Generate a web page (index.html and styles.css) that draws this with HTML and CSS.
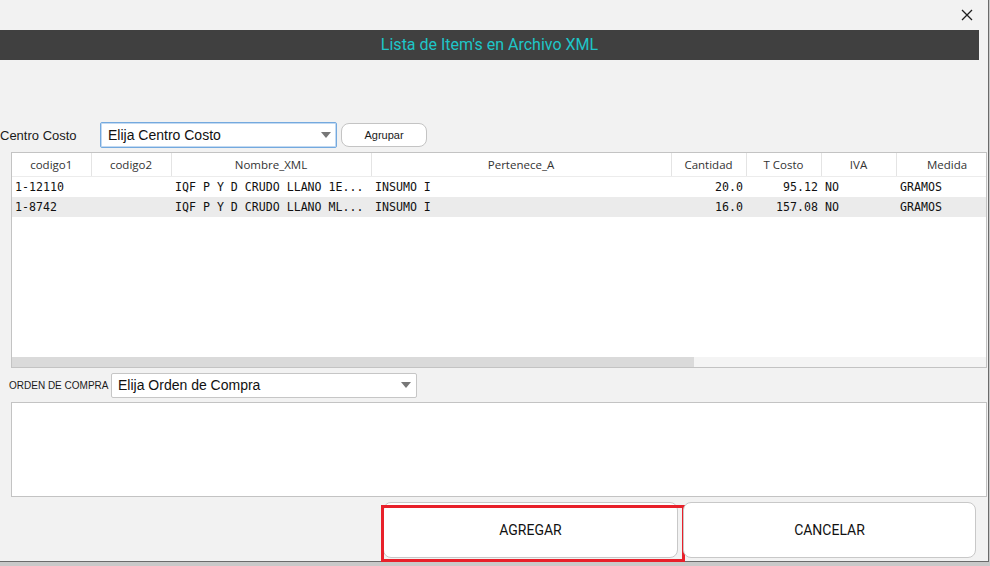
FILE: index.html
```html
<!DOCTYPE html>
<html lang="es">
<head>
    <meta charset="UTF-8">
    <meta name="viewport" content="width=device-width, initial-scale=1.0">
    <title>Lista de Item's en Archivo XML</title>
    <link rel="stylesheet" href="styles.css">
</head>
<body>
    <div class="window">
        <div class="topbar">
            <button class="close" type="button" aria-label="Cerrar">
                <svg width="12" height="12" viewBox="0 0 12 12"><path d="M1 1 L11 11 M11 1 L1 11" stroke="#1e1e1e" stroke-width="1.3" fill="none"/></svg>
            </button>
        </div>
        <h1 class="title">Lista de Item's en Archivo XML</h1>

        <div class="toolbar">
            <span class="label">Centro Costo</span>
            <div class="select select-focus select-centro">
                <span>Elija Centro Costo</span>
                <svg width="10" height="6" viewBox="0 0 10 6"><path d="M0 0 H10 L5 6 Z" fill="#777"/></svg>
            </div>
            <button class="btn-small" type="button">Agrupar</button>
        </div>

        <div class="grid">
            <div class="grid-view">
                <table>
                    <colgroup>
                        <col style="width:79px"><col style="width:80px"><col style="width:200px"><col style="width:300px">
                        <col style="width:75px"><col style="width:75px"><col style="width:75px"><col style="width:102px">
                    </colgroup>
                    <thead>
                        <tr>
                            <th>codigo1</th><th>codigo2</th><th>Nombre_XML</th><th>Pertenece_A</th>
                            <th>Cantidad</th><th>T Costo</th><th>IVA</th><th>Medida</th>
                        </tr>
                    </thead>
                    <tbody>
                        <tr>
                            <td>1-12110</td><td></td><td>IQF P Y D CRUDO LLANO 1E...</td><td>INSUMO I</td>
                            <td class="num">20.0</td><td class="num">95.12</td><td>NO</td><td>GRAMOS</td>
                        </tr>
                        <tr class="alt">
                            <td>1-8742</td><td></td><td>IQF P Y D CRUDO LLANO ML...</td><td>INSUMO I</td>
                            <td class="num">16.0</td><td class="num">157.08</td><td>NO</td><td>GRAMOS</td>
                        </tr>
                    </tbody>
                </table>
            </div>
            <div class="hscroll"><div class="thumb"></div></div>
        </div>

        <div class="orden-row">
            <span class="label-small">ORDEN DE COMPRA</span>
            <div class="select select-orden">
                <span>Elija Orden de Compra</span>
                <svg width="10" height="6" viewBox="0 0 10 6"><path d="M0 0 H10 L5 6 Z" fill="#777"/></svg>
            </div>
        </div>

        <div class="notes"></div>

        <div class="actions">
            <button class="action" type="button">AGREGAR<span class="highlight"></span></button>
            <button class="action action-cancel" type="button">CANCELAR</button>
        </div>
    </div>
</body>
</html>
```

FILE: styles.css
```css
body {
    margin: 0;
    background: #c9c9c9;
    font-family: "Liberation Sans", Arial, sans-serif;
}
.window {
    width: 988px;
    height: 561px;
    background: #f2f2f2;
    border-right: 1px solid #6b6b6b;
    border-bottom: 1px solid #6b6b6b;
    display: flex;
    flex-direction: column;
}
.topbar {
    height: 30px;
    display: flex;
    justify-content: flex-end;
    align-items: center;
    padding-right: 15px;
}
.close {
    background: none;
    border: none;
    padding: 0;
    width: 12px;
    height: 12px;
    display: flex;
}
.title {
    margin: 0 9px 0 0;
    height: 30px;
    background: #404040;
    color: #1ec6c8;
    font-family: Roboto, sans-serif;
    font-weight: 400;
    font-size: 16px;
    line-height: 30px;
    text-align: center;
}
.toolbar {
    margin-top: 62px;
    height: 26px;
    display: flex;
    align-items: center;
}
.label {
    width: 100px;
    font-size: 13px;
    color: #1a1a1a;
}
.select {
    box-sizing: border-box;
    background: #fff;
    border: 1px solid #c6c6c6;
    border-radius: 2px;
    display: flex;
    align-items: center;
    justify-content: space-between;
    font-size: 14px;
    color: #111;
}
.select-focus {
    border-color: #74a9de;
    box-shadow: inset 0 0 0 1px #c3daf2;
}
.select-centro {
    width: 237px;
    height: 26px;
    padding: 0 5px 0 7px;
}
.btn-small {
    margin-left: 4px;
    width: 86px;
    height: 24px;
    background: #fff;
    border: 1px solid #c4c4c4;
    border-radius: 8px;
    font-family: "Liberation Sans", Arial, sans-serif;
    font-size: 11px;
    color: #1a1a1a;
    padding: 0;
}
.grid {
    margin: 4px 0 0 11px;
    width: 974px;
    border: 1px solid #c3c3c3;
    background: #fff;
}
.grid-view {
    height: 204px;
    overflow: hidden;
}
table {
    border-collapse: collapse;
    table-layout: fixed;
    width: 986px;
}
th {
    height: 23px;
    padding: 0;
    font-family: "Open Sans", sans-serif;
    font-weight: 400;
    font-size: 11.5px;
    color: #333;
    text-align: center;
    border-right: 1px solid #e4e4e4;
    border-bottom: 1px solid #ececec;
    white-space: nowrap;
}
td {
    height: 20px;
    padding: 0 4px;
    font-family: "DejaVu Sans Mono", monospace;
    font-size: 11.6px;
    color: #111;
    white-space: nowrap;
    overflow: hidden;
}
td:first-child {
    padding-left: 3px;
}
td.num {
    text-align: right;
    padding-right: 3px;
}
tr.alt td {
    background: #ebebeb;
}
.hscroll {
    height: 10px;
    background: #f4f4f4;
}
.thumb {
    width: 682px;
    height: 10px;
    background: #dadada;
}
.orden-row {
    margin-top: 5px;
    height: 24px;
    display: flex;
    align-items: center;
    padding-left: 9px;
}
.label-small {
    width: 102px;
    font-size: 10px;
    color: #1a1a1a;
}
.select-orden {
    width: 306px;
    height: 25px;
    padding: 0 5px 0 6px;
}
.notes {
    margin: 5px 0 0 11px;
    width: 974px;
    height: 93px;
    background: #fff;
    border: 1px solid #c3c3c3;
}
.actions {
    margin-top: 5px;
    display: flex;
    gap: 5px;
    padding-left: 383px;
}
.action {
    position: relative;
    width: 295px;
    height: 56px;
    background: #fff;
    border: 1px solid #c8c8c8;
    border-radius: 8px;
    font-family: Roboto, sans-serif;
    font-size: 14px;
    color: #111;
    padding: 0;
}
.action-cancel {
    width: 293px;
}
.highlight {
    position: absolute;
    left: -3px;
    top: 2px;
    width: 298px;
    height: 51px;
    border: 3px solid #e8202a;
}
```
